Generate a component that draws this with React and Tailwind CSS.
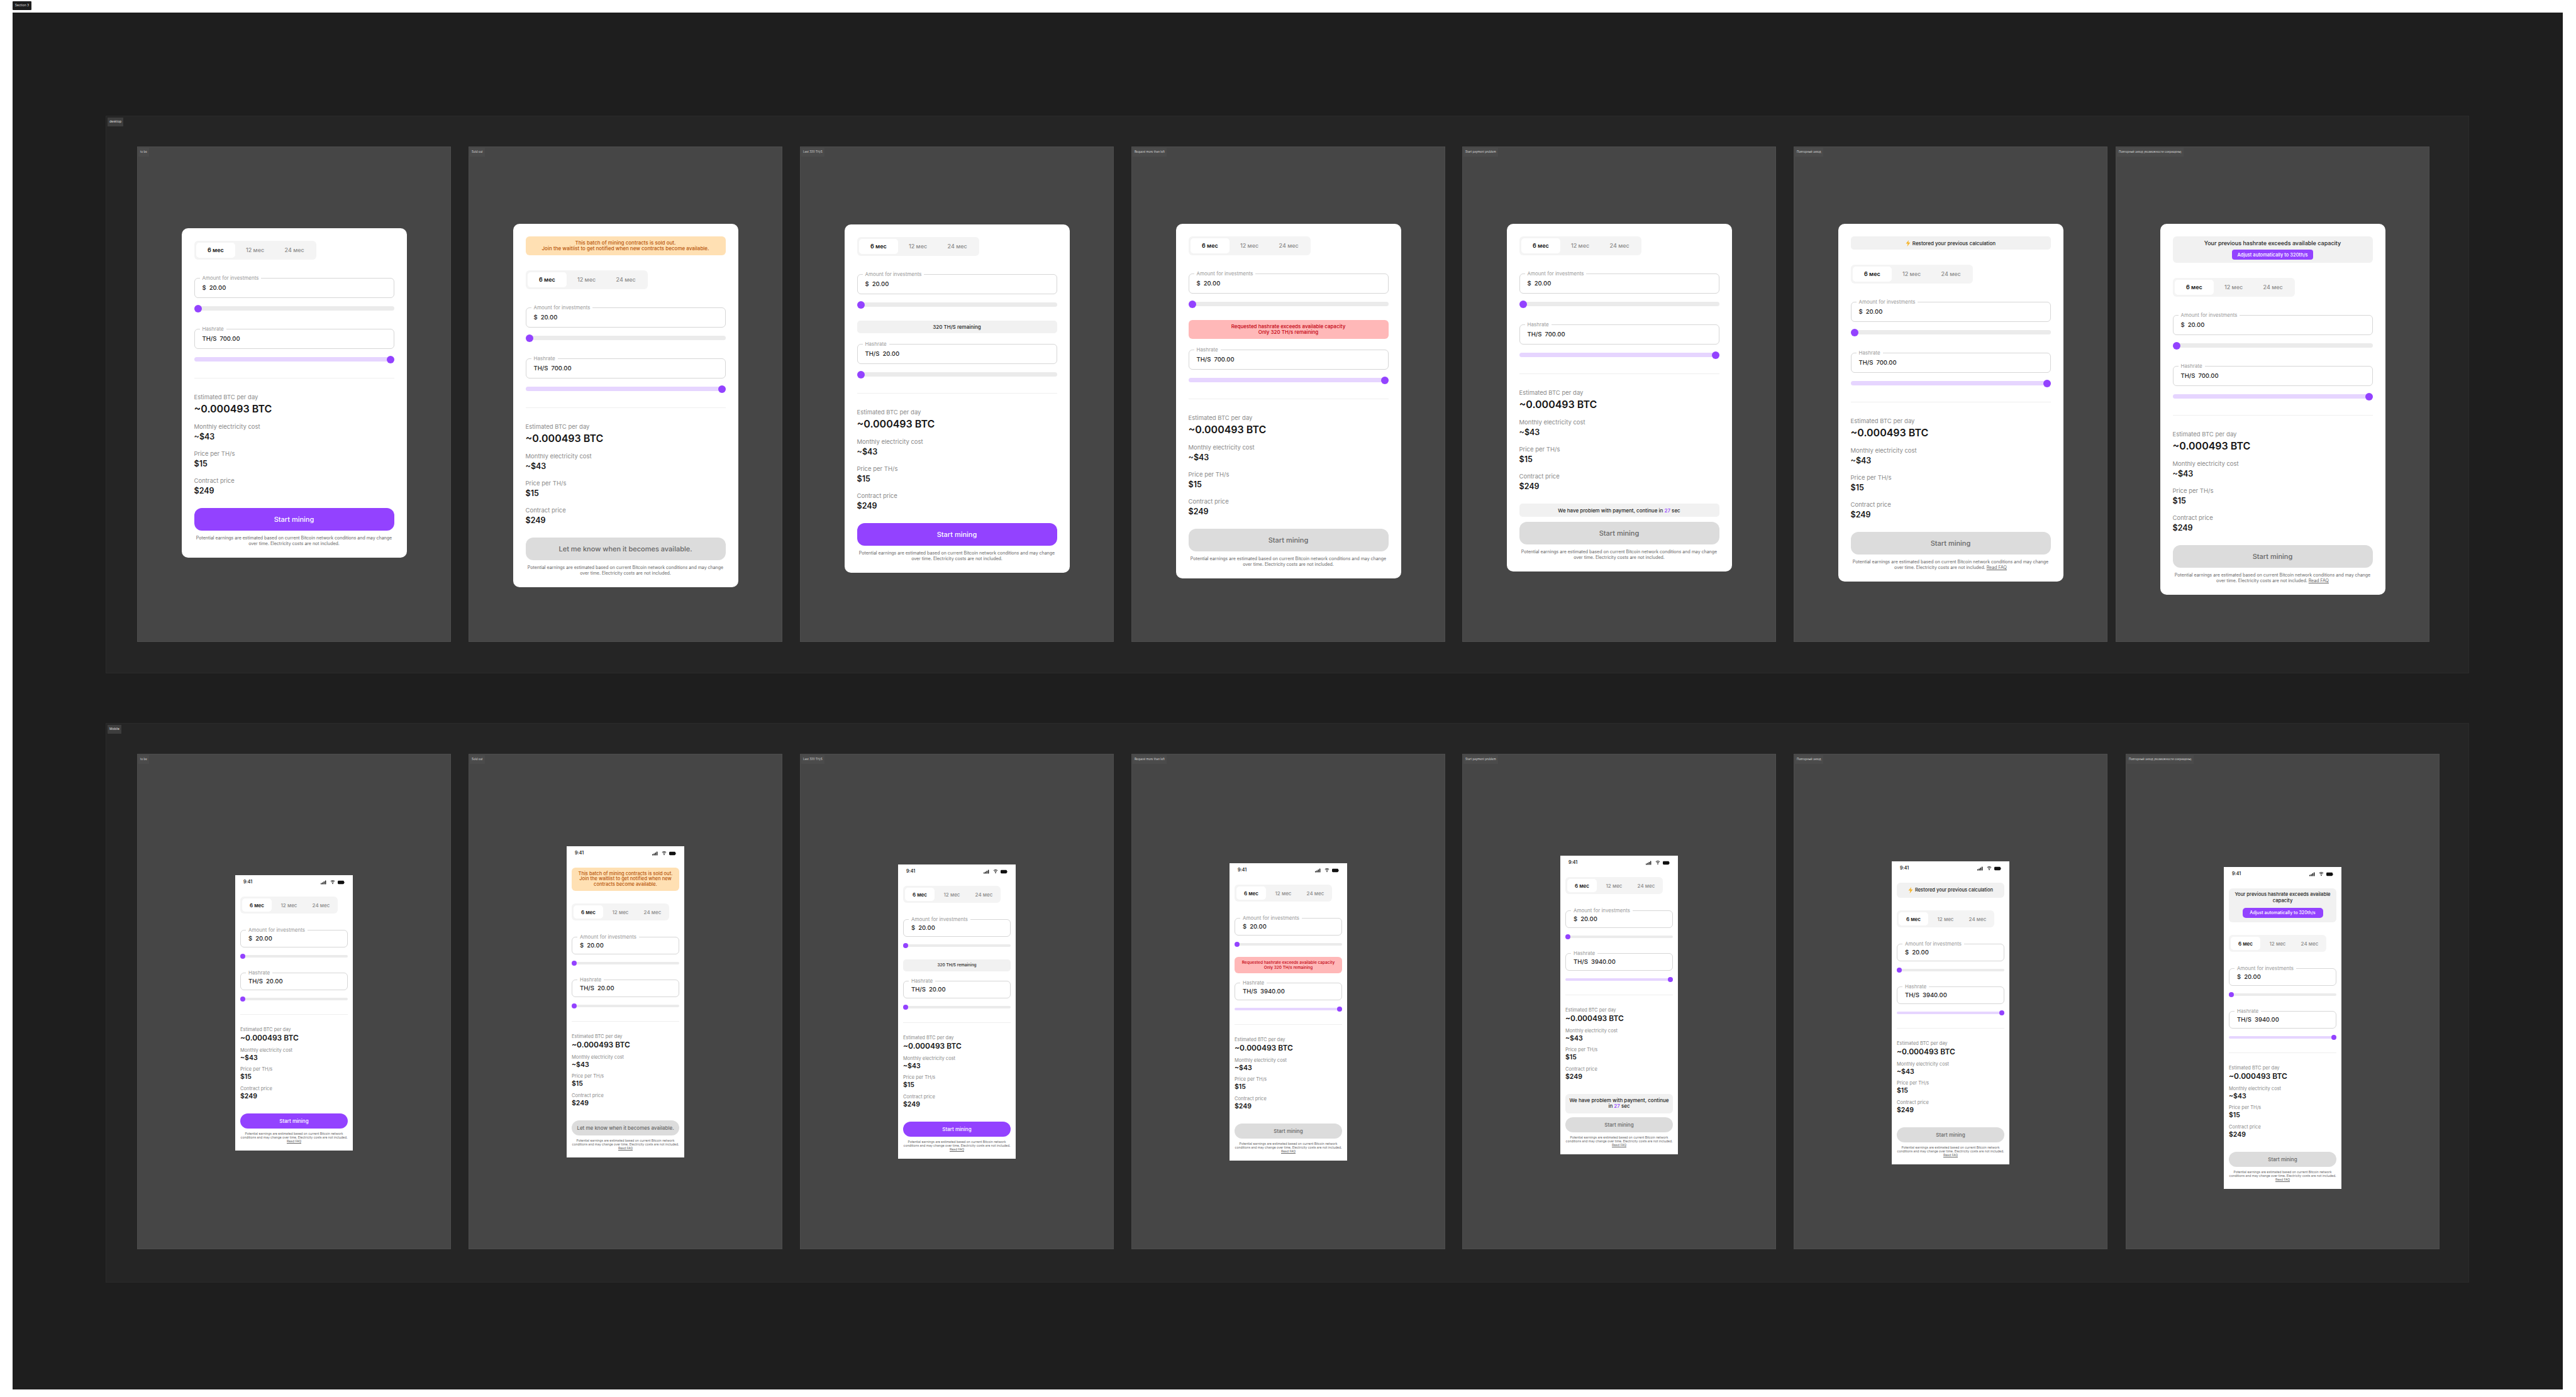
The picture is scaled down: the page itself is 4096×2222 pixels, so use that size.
import React from 'react';

const D = {
  card: 'w-[358px] rounded-[10px] px-5 pt-5 pb-[18px]',
  bannerGap: 'mb-6',
  banner: 'h-[30px] rounded-[6px] text-[8px] leading-[9px]',
  tabs: 'w-[194px] h-[30px] p-[3px] rounded-[6px]',
  tab: 'w-[63px] rounded-[5px] text-[9px]',
  tabsGap: 'mb-[29px]',
  field: 'h-[32px] rounded-[6px]',
  sliderTrack: 'h-[7px] mt-[13px]',
  thumb: 'w-3 h-3 -top-[2.5px]',
  fieldGap: 'mt-[29px]',
  divider: 'mt-[26px] mb-[24px]',
  label: 'text-[9.5px] leading-[12px]',
  big: 'text-[16px] leading-[20px] mt-[2px]',
  val: 'text-[12.5px] leading-[16px] mt-[2px]',
  statGap: 'mt-[13px]',
  actionsGap: 'mt-[19px]',
  btn: 'h-9 rounded-xl text-[11px]',
  foot: 'mt-[7px] text-[7px] leading-[9px]',
  bar: 'h-[21px] rounded-[5px] text-[8px]',
  midBar: 'h-5 rounded-[5px] text-[8px] mt-[22px] mb-[-12px]',
  redBar: 'h-[30px] rounded-[6px] text-[8px] leading-[9px] mt-[22px] mb-[-12px]',
  payBar: 'h-[21px] rounded-[5px] text-[8px] mb-2',
  adjust: 'h-[42px] rounded-[6px] text-[9px] leading-[11px] pt-[5px] gap-[5px]',
  adjustBtn: 'w-[129px] h-[16px] rounded-[4px] text-[7.5px]',
};

const M = {
  card: 'w-[187px] px-2 pb-3',
  bannerGap: 'mb-5',
  banner: 'h-[37px] rounded-[6px] text-[7.5px] leading-[8.4px]',
  tabs: 'w-[155px] h-[27px] p-[3px] gap-1 rounded-[6px]',
  tab: 'w-[47px] rounded-[5px] text-[8px]',
  tabsGap: 'mb-[26px]',
  field: 'h-[28px] rounded-[6px]',
  sliderTrack: 'h-[4px] mt-3',
  thumb: 'w-2 h-2 -top-[2px]',
  fieldGap: 'mt-6',
  divider: 'mt-[22px] mb-[20px]',
  label: 'text-[7.5px] leading-[8px]',
  big: 'text-[12px] leading-[14px] mt-[2px]',
  val: 'text-[10.5px] leading-[12px] mt-[2px]',
  statGap: 'mt-[8.5px]',
  actionsGap: 'mt-[21px]',
  btn: 'h-6 rounded-xl text-[8px]',
  foot: 'mt-[5px] text-[5px] leading-[6px]',
  bar: 'h-[24px] rounded-[6px] text-[7.5px]',
  midBar: 'h-[19px] rounded-[5px] text-[6.5px] mt-[20px] mb-[-9px]',
  redBar: 'h-[26px] rounded-[6px] text-[6.5px] leading-[8px] mt-[18px] mb-[-9px] px-2',
  payBar: 'h-[31px] rounded-[6px] text-[8px] leading-[9.5px] mb-[6px] px-[6px]',
  adjust: 'h-[54px] rounded-[6px] text-[7.7px] leading-[9.5px] pt-[5px] gap-[7px] px-[6px]',
  adjustBtn: 'w-[128px] h-[16px] rounded-[5px] text-[7px]',
};

function StatusBar() {
  return (
    <div className="h-[22px] mb-3 -mx-2 pl-[13px] pr-[13px] flex items-center justify-between">
      <span className="text-[7px] font-semibold text-[#222]">9:41</span>
      <svg width="38" height="7" viewBox="0 0 38 7" fill="#111">
        <rect x="0" y="4.6" width="1.5" height="1.9" rx=".3" />
        <rect x="2.3" y="3.4" width="1.5" height="3.1" rx=".3" />
        <rect x="4.6" y="2" width="1.5" height="4.5" rx=".3" />
        <rect x="6.9" y=".6" width="1.5" height="5.9" rx=".3" />
        <path d="M15.8 1.7 C17.6 .1 20.4 .1 22.2 1.7" fill="none" stroke="#111" strokeWidth="1" />
        <path d="M17 3.1 C18.1 2.2 19.9 2.2 21 3.1" fill="none" stroke="#111" strokeWidth="1" />
        <path d="M19 6.4 L17.9 4.6 C18.5 4.1 19.5 4.1 20.1 4.6 Z" />
        <rect x="27" y=".8" width="10" height="5.4" rx="1.4" />
        <rect x="37.3" y="2.6" width=".7" height="1.8" rx=".3" />
      </svg>
    </div>
  );
}

function Tabs({ s }) {
  return (
    <div className={`flex bg-[#f4f4f4] ${s.tabs} ${s.tabsGap}`}>
      {['6 мес', '12 мес', '24 мес'].map((t, i) => (
        <div
          key={t}
          className={`flex items-center justify-center ${s.tab} ${i === 0 ? 'bg-white font-semibold text-[#151515]' : 'font-medium text-[#8c8c8c]'}`}
        >
          {t}
        </div>
      ))}
    </div>
  );
}

function Field({ s, label, unit, value, className = '' }) {
  return (
    <div className={`relative flex items-center gap-[5px] border border-[#d6d6d6] bg-white px-3 text-[9.5px] font-medium text-[#222] ${s.field} ${className}`}>
      <span className="absolute -top-[6px] left-[8px] bg-white px-1 text-[8px] leading-[10px] font-normal text-[#9a9a9a]">{label}</span>
      <span>{unit}</span>
      <span>{value}</span>
    </div>
  );
}

function Slider({ s, full }) {
  return (
    <div className={`relative rounded-full ${s.sliderTrack} ${full ? 'bg-[#e6d5ff]' : 'bg-[#ebebeb]'}`}>
      <div className={`absolute rounded-full bg-[#9342ff] ${s.thumb} ${full ? 'right-0' : 'left-0'}`} />
    </div>
  );
}

function Stat({ s, label, value, big, first }) {
  return (
    <div className={first ? '' : s.statGap}>
      <div className={`text-[#8a8a8a] ${s.label}`}>{label}</div>
      <div className={`font-semibold text-[#141414] ${big ? s.big : s.val}`}>{value}</div>
    </div>
  );
}

function Banner({ s, type, mobile }) {
  if (type === 'soldout') {
    return (
      <div className={`flex flex-col items-center justify-center bg-[#ffe0b3] text-center font-medium text-[#b8560b] ${s.banner} ${s.bannerGap}`}>
        <span>This batch of mining contracts is sold out.</span>
        {mobile ? (
          <>
            <span>Join the waitlist to get notified when new</span>
            <span>contracts become available.</span>
          </>
        ) : (
          <span>Join the waitlist to get notified when new contracts become available.</span>
        )}
      </div>
    );
  }
  if (type === 'restored') {
    return (
      <div className={`flex items-center justify-center gap-[3px] bg-[#f1f1f1] font-medium text-[#222] ${s.bar} ${s.bannerGap}`}>
        <svg width="8" height="10" viewBox="0 0 8 10" fill="#f5b52e">
          <path d="M5 0 L.5 5.6 H3.4 L2.6 10 L7.5 3.8 H4.4 Z" />
        </svg>
        <span>Restored your previous calculation</span>
      </div>
    );
  }
  if (type === 'adjust') {
    return (
      <div className={`flex flex-col items-center bg-[#f1f1f1] text-center font-medium text-[#222] ${s.adjust} ${s.bannerGap}`}>
        <span>Your previous hashrate exceeds available capacity</span>
        <span className={`flex items-center justify-center bg-[#9342ff] font-medium text-white ${s.adjustBtn}`}>Adjust automatically to 320th/s</span>
      </div>
    );
  }
  return null;
}

function Card({ mobile, banner, mid, pay, muted, waitlist, hash, full, faq }) {
  const s = mobile ? M : D;
  return (
    <div className={`bg-white font-['Inter',sans-serif] ${s.card}`}>
      {mobile && <StatusBar />}
      <Banner s={s} type={banner} mobile={mobile} />
      <Tabs s={s} />
      <Field s={s} label="Amount for investments" unit="$" value="20.00" />
      <Slider s={s} />
      {mid === 'left' && (
        <div className={`flex items-center justify-center bg-[#f1f1f1] font-medium text-[#222] ${s.midBar}`}>320 TH/S remaining</div>
      )}
      {mid === 'red' && (
        <div className={`flex flex-col items-center justify-center bg-[#ffb8b8] text-center font-medium text-[#c3000f] ${s.redBar}`}>
          <span>Requested hashrate exceeds available capacity</span>
          <span>Only 320 TH/s remaining</span>
        </div>
      )}
      <Field s={s} label="Hashrate" unit="TH/S" value={hash} className={s.fieldGap} />
      <Slider s={s} full={full} />
      <div className={`h-px bg-[#efefef] ${s.divider}`} />
      <Stat s={s} first big label="Estimated BTC per day" value="~0.000493 BTC" />
      <Stat s={s} label="Monthly electricity cost" value="~$43" />
      <Stat s={s} label="Price per TH/s" value="$15" />
      <Stat s={s} label="Contract price" value="$249" />
      <div className={s.actionsGap}>
        {pay && (
          <div className={`flex items-center justify-center bg-[#f1f1f1] text-center font-medium text-[#222] ${s.payBar}`}>
            <span>We have problem with payment, continue in <span className="text-[#9342ff]">27</span> sec</span>
          </div>
        )}
        <div className={`flex items-center justify-center font-medium ${s.btn} ${muted ? 'bg-[#dcdcdc] text-[#666666]' : 'bg-[#9342ff] text-white'}`}>
          {waitlist ? 'Let me know when it becomes available.' : 'Start mining'}
        </div>
      </div>
      <p className={`text-center text-[#666666] ${s.foot}`}>
        Potential earnings are estimated based on current Bitcoin network conditions and may change over time. Electricity costs are not included.
        {faq && <> <span className={mobile ? 'block underline' : 'underline'}>Read FAQ</span></>}
      </p>
    </div>
  );
}

function Frame({ name, gap, top, children }) {
  return (
    <div className={`relative flex h-[788px] w-[499px] shrink-0 items-start justify-center border border-[#4d4d4d] bg-[#464646] ${gap} ${top}`}>
      <span className="absolute left-[1px] top-[1px] flex h-[14px] items-center whitespace-nowrap bg-[#4b4b4b] px-[3px] text-[4.5px] text-[#d8d8d8]">{name}</span>
      {children}
    </div>
  );
}

function Section({ name, className, children }) {
  return (
    <div className={`relative ml-[148px] flex w-[3758px] border border-[#2b2b2b] bg-[#252525] pl-[49px] pt-[48px] ${className}`}>
      <span className="absolute left-[2px] top-[2px] flex h-[14px] items-center bg-[#3d3d3d] px-[3px] text-[5px] text-[#dddddd]">{name}</span>
      {children}
    </div>
  );
}

export default function App() {
  return (
    <div className="h-[2222px] w-[4096px] overflow-hidden bg-white pl-5 pt-[2px] font-['Inter',sans-serif]">
      <div className="flex h-[14px] w-[30px] items-center justify-center rounded-[1px] bg-[#1e1e1e] text-[5px] text-[#dddddd]">Section 3</div>
      <div className="mt-[4px] h-[2190px] w-[4055px] bg-[#1e1e1e] pt-[164px]">
        <Section name="desktop" className="h-[887px]">
          <Frame name="to be" gap="" top="pt-[129px]"><Card full hash="700.00" /></Frame>
          <Frame name="Sold out" gap="ml-[28px]" top="pt-[122px]"><Card banner="soldout" full hash="700.00" muted waitlist /></Frame>
          <Frame name="Last 320 TH/S" gap="ml-[28px]" top="pt-[123px]"><Card mid="left" hash="20.00" /></Frame>
          <Frame name="Request more than left" gap="ml-[28px]" top="pt-[122px]"><Card mid="red" full hash="700.00" muted /></Frame>
          <Frame name="Start payment problem" gap="ml-[27px]" top="pt-[122px]"><Card pay full hash="700.00" muted /></Frame>
          <Frame name="Повторный заход" gap="ml-[28px]" top="pt-[122px]"><Card banner="restored" full hash="700.00" muted faq /></Frame>
          <Frame name="Повторный заход (возможности сокращены)" gap="ml-[13px]" top="pt-[122px]"><Card banner="adjust" full hash="700.00" muted faq /></Frame>
        </Section>
        <Section name="Mobile" className="mt-[79px] h-[890px]">
          <Frame name="to be" gap="" top="pt-[192px]"><Card mobile hash="20.00" faq /></Frame>
          <Frame name="Sold out" gap="ml-[28px]" top="pt-[146px]"><Card mobile banner="soldout" hash="20.00" muted waitlist faq /></Frame>
          <Frame name="Last 320 TH/S" gap="ml-[28px]" top="pt-[175px]"><Card mobile mid="left" hash="20.00" faq /></Frame>
          <Frame name="Request more than left" gap="ml-[28px]" top="pt-[173px]"><Card mobile mid="red" full hash="3940.00" muted faq /></Frame>
          <Frame name="Start payment problem" gap="ml-[27px]" top="pt-[161px]"><Card mobile pay full hash="3940.00" muted faq /></Frame>
          <Frame name="Повторный заход" gap="ml-[28px]" top="pt-[170px]"><Card mobile banner="restored" full hash="3940.00" muted faq /></Frame>
          <Frame name="Повторный заход (возможности сокращены)" gap="ml-[29px]" top="pt-[179px]"><Card mobile banner="adjust" full hash="3940.00" muted faq /></Frame>
        </Section>
      </div>
    </div>
  );
}
